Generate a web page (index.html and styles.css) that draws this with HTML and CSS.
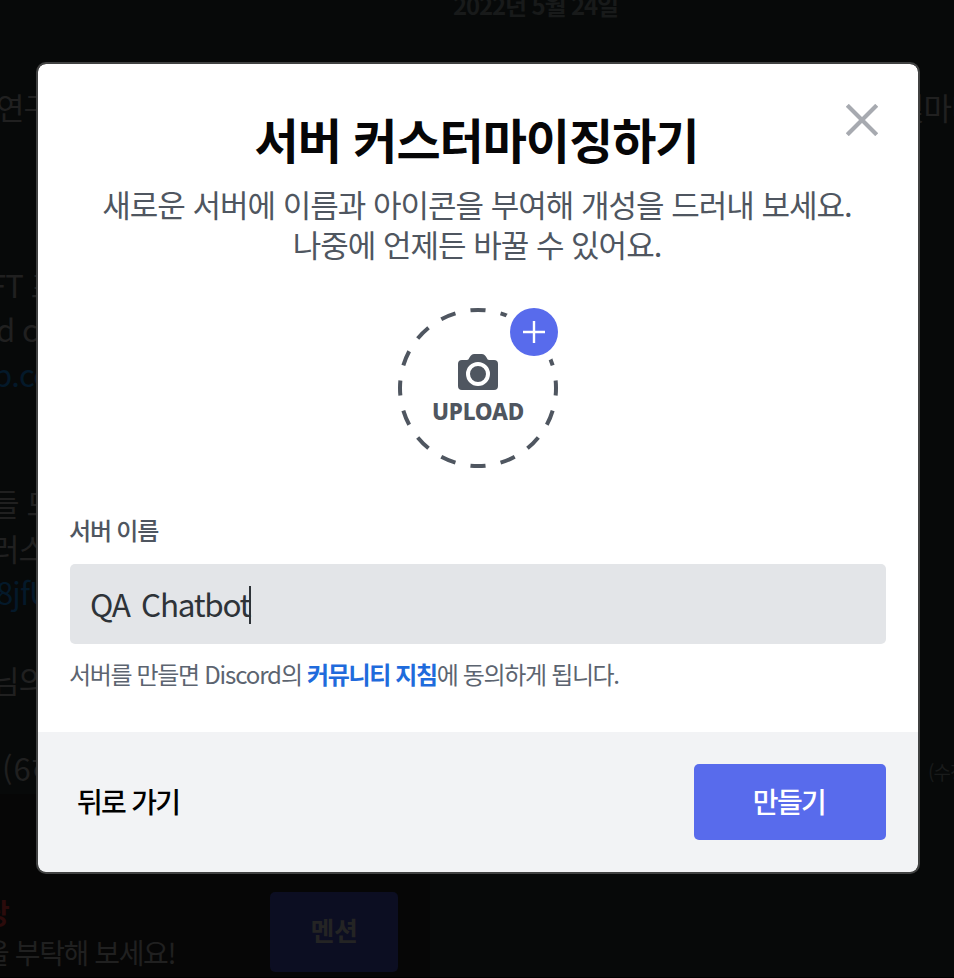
FILE: index.html
```html
<!DOCTYPE html>
<html lang="ko">
<head>
<meta charset="utf-8">
<title>서버 커스터마이징하기</title>
<link rel="stylesheet" href="styles.css">
</head>
<body>
<div class="chat" aria-hidden="true">
  <div class="date">2022년 5월 24일</div>
  <div class="line line-first"><span class="pull-s">연구</span><span class="tail">및마다</span></div>
  <div class="line line-gap-l"><span class="pull-m">FT 프</span></div>
  <div class="line"><span class="pull-s">d ch</span></div>
  <div class="line link"><span class="pull-b">b.co</span></div>
  <div class="line line-gap-m"><span class="pull-l">들 모</span></div>
  <div class="line"><span class="pull-l">러스</span></div>
  <div class="line link"><span class="pull-s">8jfU</span></div>
  <div class="line line-gap-s"><span class="pull-l">님의</span></div>
  <div class="line line-gap-s"><span class="push">(6하</span><span class="edited">(수정됨)</span></div>
  <div class="embed">
    <div class="embed-text">
      <div class="embed-title">당</div>
      <div class="embed-desc">을 부탁해 보세요!</div>
    </div>
    <div class="mention">멘션</div>
  </div>
</div>

<div class="modal" role="dialog">
  <button class="close" aria-label="닫기">
    <svg width="32" height="32" viewBox="0 0 32 32"><path d="M1.3 1.3 30.7 30.7M30.7 1.3 1.3 30.7" stroke="#a7aab0" stroke-width="4.2" fill="none"/></svg>
  </button>
  <div class="body">
    <h1 class="title">서버 커스터마이징하기</h1>
    <div class="desc"><div>새로운 서버에 이름과 아이콘을 부여해 개성을 드러내 보세요.</div><div>나중에 언제든 바꿀 수 있어요.</div></div>
    <div class="upload">
      <svg width="160" height="160" viewBox="0 0 160 160">
        <g fill="none" stroke="#4f5660" stroke-width="4">
          <circle cx="80" cy="80" r="78" pathLength="192" stroke-dasharray="6 6" stroke-dashoffset="3"/>
        </g>
        <circle cx="136" cy="24" r="32" fill="#fff"/>
        <circle cx="136" cy="24" r="24" class="badge"/>
        <path d="M136 13v22M125 24h22" stroke="#fff" stroke-width="2.4"/>
        <path d="M64 52H69Q70.500 52 71.500 49.500L72.500 48Q74 46 76 46H84Q86 46 87.500 48L88.500 49.500Q89.500 52 91 52H96Q100 52 100 56V78Q100 82 96 82H64Q60 82 60 78V56Q60 52 64 52Z" fill="#4f5660"/>
        <circle cx="80" cy="66" r="10" fill="#4f5660" stroke="#fff" stroke-width="4"/>
      </svg>
      <span class="upload-label">UPLOAD</span>
    </div>
    <div class="label">서버 이름</div>
    <div class="field"><span class="value">QA Chatbot</span><span class="caret"></span></div>
    <p class="hint">서버를 만들면 <span class="latin">Discord</span>의 <a class="guide">커뮤니티 지침</a>에 동의하게 됩니다.</p>
  </div>
  <div class="footer">
    <button class="back">뒤로 가기</button>
    <button class="create">만들기</button>
  </div>
</div>
</body>
</html>
```

FILE: styles.css
```css
* { box-sizing: border-box; }
body {
  margin: 0;
  width: 954px;
  height: 978px;
  overflow: hidden;
  position: relative;
  background: #070909;
  font-family: "Noto Sans CJK KR", sans-serif;
}
button { border: 0; padding: 0; background: none; font: inherit; }

.chat { height: 978px; overflow: hidden; color: #202020; border-bottom: 1px solid #000; }
.date {
  height: 24px;
  margin-top: -7px;
  padding-left: 453px;
  font-size: 24px;
  line-height: 24px;
  font-weight: 700;
  letter-spacing: -1.15px;
  color: #181a1a;
}
.line {
  display: flex;
  justify-content: space-between;
  height: 44.500px;
  line-height: 44.500px;
  font-size: 31px;
  letter-spacing: -0.9px;
  white-space: pre;
}
.line-first { margin-top: 68px; }
.line-gap-l { margin-top: 133px; }
.line-gap-m { margin-top: 85px; }
.line-gap-s { margin-top: 43.500px; }
.link { color: #04192a; }
.pull-s { margin-left: -4px; }
.pull-b { margin-left: -7px; }
.pull-m { margin-left: -11px; }
.pull-l { margin-left: -9px; }
.push { margin-left: 2px; letter-spacing: 0.9px; }
.tail { width: 58px; }
.edited { width: 26px; font-size: 19px; padding-top: 4px; color: #191b1b; }
.embed {
  display: flex;
  justify-content: space-between;
  width: 430px;
  height: 186px;
  margin-top: 3px;
  padding: 98px 32px 0 0;
  background: #060606;
}
.embed-text { margin-left: -16px; font-size: 28px; line-height: 40px; letter-spacing: -1.4px; }
.embed-title { font-weight: 700; color: #2b0b0b; }
.mention {
  width: 128px;
  height: 80px;
  border-radius: 5px;
  background: #0c0e22;
  color: #242424;
  font-size: 26px;
  line-height: 76px;
  font-weight: 700;
  letter-spacing: -0.5px;
  text-align: center;
}

.modal {
  position: absolute;
  left: 38px;
  top: 64px;
  width: 880px;
  height: 808px;
  overflow: hidden;
  border-radius: 8px;
  background: #fff;
  display: flex;
  flex-direction: column;
  outline: 2px solid #414242;
}
.close { position: absolute; left: 808px; top: 40px; width: 32px; height: 32px; }
.close svg { display: block; }
.body { height: 668px; padding: 44px 32px 0; }
.title {
  margin: 0 3px 0 0;
  height: 60px;
  line-height: 60px;
  font-size: 48px;
  font-weight: 700;
  letter-spacing: -1px;
  text-align: center;
  color: #060607;
}
.desc {
  margin: 16px -19px 0 -21px;
  height: 80px;
  font-size: 31px;
  line-height: 40px;
  letter-spacing: -1px;
  text-align: center;
  color: #4f5660;
}
.upload { position: relative; width: 160px; height: 160px; margin: 44px auto 0; }
.upload svg { display: block; }
.upload-label {
  position: absolute;
  left: 0;
  top: 90px;
  width: 160px;
  text-align: center;
  font: 800 22.500px/28px "Noto Sans", sans-serif;
  letter-spacing: -0.2px;
  color: #4f5660;
}
.label {
  margin: 46px 0 0 -1px;
  height: 32px;
  line-height: 32px;
  font-size: 24px;
  font-weight: 500;
  letter-spacing: -1.2px;
  color: #4f5660;
}
.field {
  display: flex;
  align-items: center;
  height: 80px;
  margin-top: 18px;
  padding-left: 20px;
  border-radius: 5px;
  background: #e3e5e8;
  color: #2e3338;
  font: 31.500px/40px "Noto Sans CJK KR", sans-serif;
}
.value { letter-spacing: -1.3px; word-spacing: 4px; margin-top: -2px; }
.caret { width: 2px; height: 38px; background: #2e3338; margin-left: -1px; margin-top: 2px; }
.hint {
  margin: 14px 0 0 -1px;
  height: 32px;
  line-height: 32px;
  font-size: 24px;
  letter-spacing: -1.35px;
  white-space: nowrap;
  color: #5c6470;
}
.latin { letter-spacing: -1.1px; }
.guide { color: #1f6bdc; font-weight: 700; }
.footer {
  flex: 1;
  display: flex;
  justify-content: space-between;
  align-items: center;
  padding: 0 32px 0 39px;
  background: #f2f3f5;
}
.back { font-size: 28px; font-weight: 500; letter-spacing: -1.7px; color: #000; padding-bottom: 3px; }
.create {
  width: 192px;
  height: 76px;
  padding: 0 2px 3px 0;
  border-radius: 5px;
  background: #586bec;
  color: #fff;
  font-size: 28px;
  font-weight: 500;
  letter-spacing: -1.6px;
}
.badge { fill: #586bec; }
```
